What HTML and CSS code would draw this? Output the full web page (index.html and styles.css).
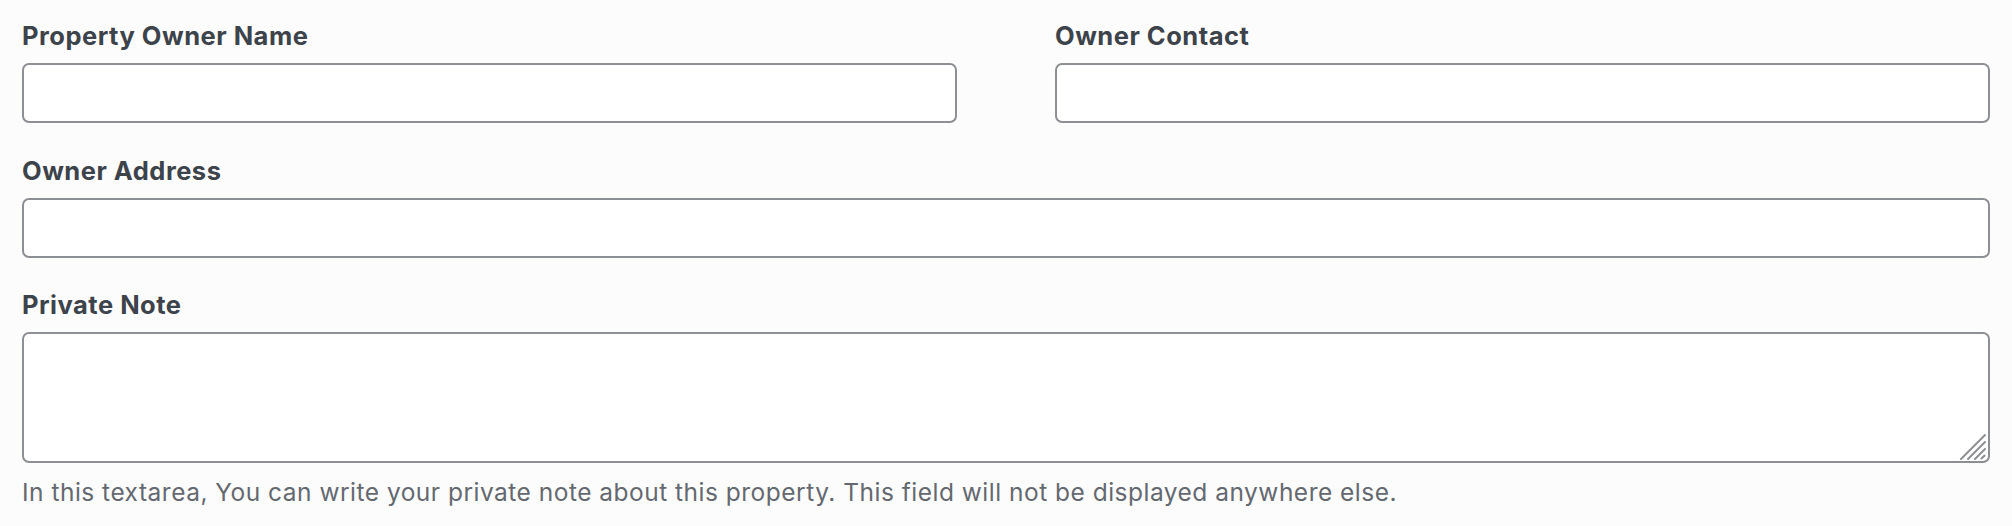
FILE: index.html
```html
<!DOCTYPE html>
<html lang="en">
<head>
<meta charset="utf-8">
<title>Property Owner</title>
<link rel="stylesheet" href="styles.css">
</head>
<body>
<form class="owner-form">
  <div class="row two-col">
    <div class="field">
      <label class="field-label" for="owner-name">Property Owner Name</label>
      <input class="field-input" id="owner-name" type="text">
    </div>
    <div class="field">
      <label class="field-label" for="owner-contact">Owner Contact</label>
      <input class="field-input" id="owner-contact" type="text">
    </div>
  </div>
  <div class="row">
    <div class="field">
      <label class="field-label" for="owner-address">Owner Address</label>
      <input class="field-input" id="owner-address" type="text">
    </div>
  </div>
  <div class="row">
    <div class="field">
      <label class="field-label" for="private-note">Private Note</label>
      <div class="textarea-wrap">
        <textarea class="field-textarea" id="private-note"></textarea>
        <svg class="resize-grip" width="28" height="28" viewBox="0 0 28 28" aria-hidden="true">
          <line x1="3" y1="27" x2="27" y2="3" />
          <line x1="10" y1="27" x2="27" y2="10" />
          <line x1="17" y1="27" x2="27" y2="17" />
          <line x1="23.5" y1="26.5" x2="26.5" y2="23.5" />
        </svg>
      </div>
      <p class="field-help">In this textarea, You can write your private note about this property. This field will not be displayed anywhere else.</p>
    </div>
  </div>
</form>
</body>
</html>
```

FILE: styles.css
```css
html, body {
  margin: 0;
  padding: 0;
  background: #fcfcfc;
}

body {
  font-family: Inter, "Noto Sans", "Liberation Sans", sans-serif;
  color: #3c434a;
}

.owner-form {
  display: flex;
  flex-direction: column;
  gap: 30.5px;
  padding: 19px 22px 0 22px;
}

.row {
  display: block;
}

.two-col {
  display: grid;
  grid-template-columns: 1fr 1fr;
  column-gap: 98px;
}

.field {
  display: flex;
  flex-direction: column;
}

.field-label {
  font-size: 25.5px;
  font-weight: 700;
  letter-spacing: 0.5px;
  line-height: 34px;
  margin-bottom: 10px;
  color: #3c434a;
}

.field-input,
.field-textarea {
  box-sizing: border-box;
  width: 100%;
  margin: 0;
  border: 2px solid #8c8f94;
  border-radius: 7px;
  background: #fff;
  font-family: inherit;
  font-size: 24px;
  color: #2c3338;
  padding: 0 14px;
  outline: none;
}

.field-input {
  height: 60px;
}

.textarea-wrap {
  position: relative;
}

.field-textarea {
  display: block;
  height: 131px;
  padding: 10px 14px;
  resize: none;
}

.resize-grip {
  position: absolute;
  right: 4px;
  bottom: 3px;
  stroke: #8c8f94;
  stroke-width: 2;
  stroke-linecap: round;
}

.field-help {
  margin: 12px 0 0 0;
  font-size: 24.5px;
  letter-spacing: 0.49px;
  line-height: 34px;
  color: #646970;
}
```
